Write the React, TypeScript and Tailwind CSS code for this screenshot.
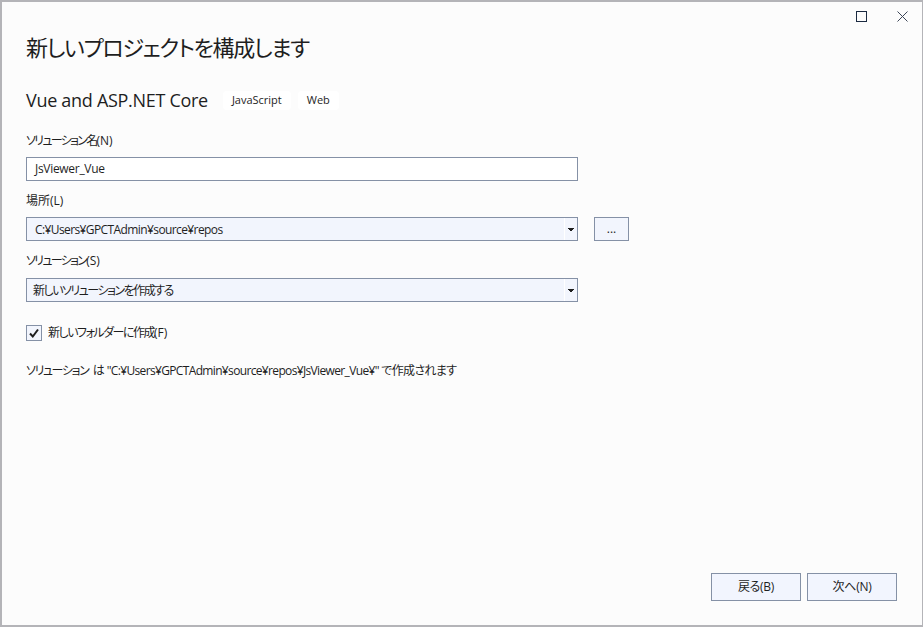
import React from 'react';

function Caret() {
  return (
    <div className="w-[13px] h-full border-l border-white flex items-center justify-center">
      <svg width="7" height="5" viewBox="0 0 7 5"><path d="M0 1h6v1H5v1H4v1H2V3H1V2H0z" fill="#1e1e1e" /></svg>
    </div>
  );
}

function Select({ value, className }: { value: string; className: string }) {
  return (
    <div className="w-[552px] h-6 border border-[#8591a6] bg-[#f2f5fd] flex items-center justify-between">
      <span className={`pt-[1px] text-[12px] text-[#1f1f1f] leading-none ${className}`}>{value}</span>
      <Caret />
    </div>
  );
}

function FooterButton({ label }: { label: string }) {
  return (
    <div className="w-[90px] h-7 border border-[#8591a6] bg-[#f2f5fe] flex items-center justify-center text-[12px] text-[#1f1f1f] tracking-[-0.3px]">{label}</div>
  );
}

export default function App() {
  return (
    <div className="w-[923px] h-[627px] bg-[#fcfcfc] border-t-2 border-l-2 border-r border-b-2 border-[#b4b4b8] flex flex-col font-['Open_Sans','Noto_Sans_CJK_JP',sans-serif] [font-feature-settings:'palt']">
      <div className="flex justify-end items-center h-[28px] pr-[14px] gap-[30px]">
        <div className="w-[11px] h-[11px] border border-[#1b2a41]" />
        <svg width="11" height="11" viewBox="0 0 11 11"><path d="M.5.5l10 10M10.5.5l-10 10" stroke="#3d4657" strokeWidth="1" /></svg>
      </div>
      <div className="pl-[24px] flex-1 flex flex-col">
        <h1 className="text-[22px] leading-[30px] mt-[2px] text-[#1e1e1e] tracking-[-1.3px]">新しいプロジェクトを構成します</h1>
        <div className="flex items-center mt-[26px] h-[24px]">
          <span className="text-[18px] text-[#1e1e1e] tracking-[-0.3px]">Vue and ASP.NET Core</span>
          <span className="ml-[15px] h-[19px] px-[9px] bg-white rounded-[4px] text-[11px] flex items-center text-[#1e1e1e]">JavaScript</span>
          <span className="ml-[7px] h-[19px] px-[9px] bg-white rounded-[4px] text-[11px] flex items-center text-[#1e1e1e]">Web</span>
        </div>
        <label className="mt-[20px] h-[18px] text-[12px] leading-[18px] text-[#1e1e1e]"><span className="tracking-[-1.7px]">ソリューション名</span>(N)</label>
        <div className="mt-[7px] w-[552px] h-6 border border-[#8591a6] bg-white flex items-center pl-[8px] text-[12px] text-[#1f1f1f] tracking-[-0.3px]">JsViewer_Vue</div>
        <label className="mt-[11px] h-[18px] text-[12px] leading-[18px] text-[#1e1e1e]">場所(L)</label>
        <div className="mt-[7px] flex items-center gap-4">
          <Select value="C:¥Users¥GPCTAdmin¥source¥repos" className="pl-[8px] tracking-[-0.6px]" />
          <div className="w-[35px] h-6 border border-[#8591a6] bg-[#f2f5fd] flex items-center justify-center text-[12px] text-[#1f1f1f]">...</div>
        </div>
        <label className="mt-[11px] h-[18px] text-[12px] leading-[18px] text-[#1e1e1e]"><span className="tracking-[-1.7px]">ソリューション</span>(S)</label>
        <div className="mt-[8px]"><Select value="新しいソリューションを作成する" className="pl-[6px] tracking-[-1.5px]" /></div>
        <div className="mt-[21px] flex items-center gap-[6px]">
          <div className="w-4 h-4 border border-[#8591a6] bg-[#f2f5fd] flex items-center justify-center">
            <svg width="12" height="12" viewBox="0 0 12 12"><path d="M2 6.5l2.8 3L10 2.5" fill="none" stroke="#1e1e1e" strokeWidth="2" /></svg>
          </div>
          <span className="pt-[1px] text-[12px] text-[#1e1e1e]"><span className="tracking-[-1.5px]">新しいフォルダーに作成</span>(F)</span>
        </div>
        <p className="mt-[20px] text-[12px] leading-[18px] text-[#1e1e1e] tracking-[-0.65px]"><span className="tracking-[-1.4px]">ソリューション</span> <span className="ml-[2px]">は</span> "C:¥Users¥GPCTAdmin¥source¥repos¥JsViewer_Vue¥" で作成されます</p>
        <div className="mt-auto mb-[24px] flex justify-end gap-[6px] pr-[25px]">
          <FooterButton label="戻る(B)" />
          <FooterButton label="次へ(N)" />
        </div>
      </div>
    </div>
  );
}
